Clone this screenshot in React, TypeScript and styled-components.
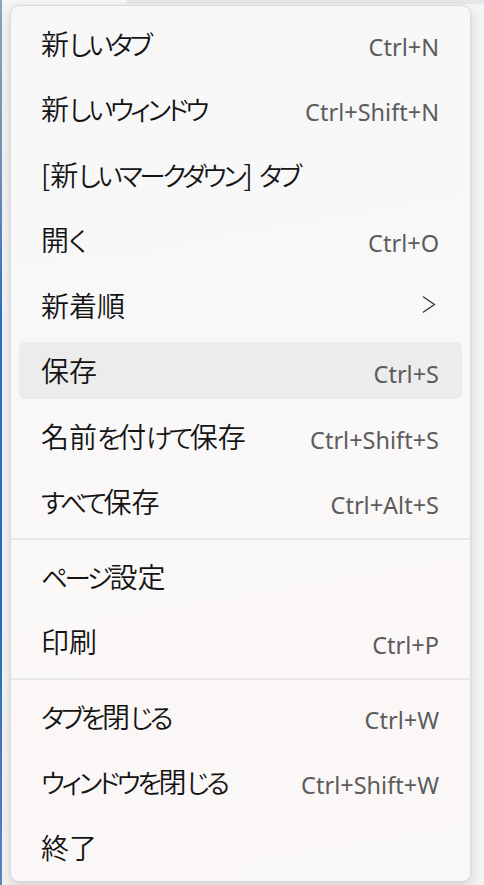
import React from "react";
import styled, { createGlobalStyle } from "styled-components";

const GlobalStyle = createGlobalStyle`
  html, body {
    margin: 0;
    padding: 0;
    width: 100%;
    height: 100%;
    overflow: hidden;
  }
  body {
    background: #f3f3f3;
    font-family: "Noto Sans CJK JP", "Noto Sans", sans-serif;
  }
  #root {
    height: 100%;
  }
`;

const Frame = styled.div`
  position: relative;
  box-sizing: border-box;
  width: 100%;
  height: 100%;
  display: flex;
  flex-direction: column;
  border-left: 2px solid #3b78c8;
  border-image: linear-gradient(180deg, #8ea3bb 0%, #6f8fb6 20%, #2f6fc6 35%, #2a6ac0 70%, #5a86bd 100%) 1;
  background: #f4f4f4;
`;

const TitleStrip = styled.div`
  height: 4px;
  display: flex;
  background: #e6e7e9;
`;

const MenuBarButton = styled.div`
  width: 125px;
  height: 4px;
  background: #f6f6f6;
  border-bottom-right-radius: 4px;
`;

const Editor = styled.div`
  flex: 1;
  box-sizing: border-box;
  padding: 880px 0 0 97px;
  background: #f4f4f4;
`;

const EditorLine = styled.div`
  font-family: "Liberation Sans", Arial, sans-serif;
  font-size: 16px;
  line-height: 16px;
  color: #000;
  white-space: pre;
`;

const Menu = styled.div`
  position: absolute;
  top: 5px;
  left: 8px;
  width: 461px;
  box-sizing: border-box;
  display: flex;
  flex-direction: column;
  padding: 4px 0 1.5px;
  border: 1px solid #dadada;
  border-radius: 9px;
  background: linear-gradient(170deg, #f7f7f7 0%, #f9f8f8 40%, #fbf7f7 75%, #faf7f7 100%);
  box-shadow: 0 6px 14px rgba(0, 0, 0, 0.13), 0 0 2px rgba(0, 0, 0, 0.08);
`;

const Item = styled.div<{ $active?: boolean }>`
  display: flex;
  align-items: center;
  height: 57.5px;
  margin: 4px 8px;
  padding: 0 23px 0 22px;
  border-radius: 6px;
  background: ${(p) => (p.$active ? "#ececec" : "transparent")};
`;

const Label = styled.span`
  flex: 1;
  font-family: "Noto Sans CJK JP", "Noto Sans", sans-serif;
  font-feature-settings: "palt" 1;
  font-size: 28px;
  font-weight: 350;
  line-height: 1;
  color: #141414;
  white-space: nowrap;
`;

const Kana = styled.span`
  font-size: 26.5px;
  letter-spacing: -3.3px;
`;

const Shortcut = styled.span`
  font-family: "Noto Sans", "Open Sans", sans-serif;
  font-size: 23.5px;
  line-height: 1;
  color: #5c5c5c;
  padding-top: 9px;
  white-space: nowrap;
`;

const Chevron = styled.svg`
  width: 14px;
  height: 17px;
  flex: none;
  margin-right: 3px;
`;

const Separator = styled.div`
  height: 2px;
  margin: 3.5px 0;
  background: #e8e8e8;
`;

type Entry =
  | { kind: "item"; label: string; shortcut?: string; submenu?: boolean; active?: boolean }
  | { kind: "sep" };

const entries: Entry[] = [
  { kind: "item", label: "新しいタブ", shortcut: "Ctrl+N" },
  { kind: "item", label: "新しいウィンドウ", shortcut: "Ctrl+Shift+N" },
  { kind: "item", label: "[新しいマークダウン] タブ" },
  { kind: "item", label: "開く", shortcut: "Ctrl+O" },
  { kind: "item", label: "新着順", submenu: true },
  { kind: "item", label: "保存", shortcut: "Ctrl+S", active: true },
  { kind: "item", label: "名前を付けて保存", shortcut: "Ctrl+Shift+S" },
  { kind: "item", label: "すべて保存", shortcut: "Ctrl+Alt+S" },
  { kind: "sep" },
  { kind: "item", label: "ページ設定" },
  { kind: "item", label: "印刷", shortcut: "Ctrl+P" },
  { kind: "sep" },
  { kind: "item", label: "タブを閉じる", shortcut: "Ctrl+W" },
  { kind: "item", label: "ウィンドウを閉じる", shortcut: "Ctrl+Shift+W" },
  { kind: "item", label: "終了" },
];

const KANA = /([\u3040-\u30ff]+)/;

function renderLabel(text: string) {
  return text.split(KANA).map((part, i) =>
    part === "" ? null : KANA.test(part) ? <Kana key={i}>{part}</Kana> : <React.Fragment key={i}>{part}</React.Fragment>
  );
}

export default function App() {
  return (
    <>
      <GlobalStyle />
      <Frame>
        <TitleStrip>
          <MenuBarButton />
        </TitleStrip>
        <Editor>
          <EditorLine>{"l aaNooooooo laaaaaaaa laaaa l"}</EditorLine>
        </Editor>
        <Menu>
          {entries.map((e, i) =>
            e.kind === "sep" ? (
              <Separator key={i} />
            ) : (
              <Item key={i} $active={e.active}>
                <Label>{renderLabel(e.label)}</Label>
                {e.shortcut && <Shortcut>{e.shortcut}</Shortcut>}
                {e.submenu && (
                  <Chevron viewBox="0 0 14 17">
                    <path d="M1.5 1 L12.5 8.5 L1.5 16" fill="none" stroke="#3a3a3a" strokeWidth="1.5" strokeLinecap="round" strokeLinejoin="round" />
                  </Chevron>
                )}
              </Item>
            )
          )}
        </Menu>
      </Frame>
    </>
  );
}
